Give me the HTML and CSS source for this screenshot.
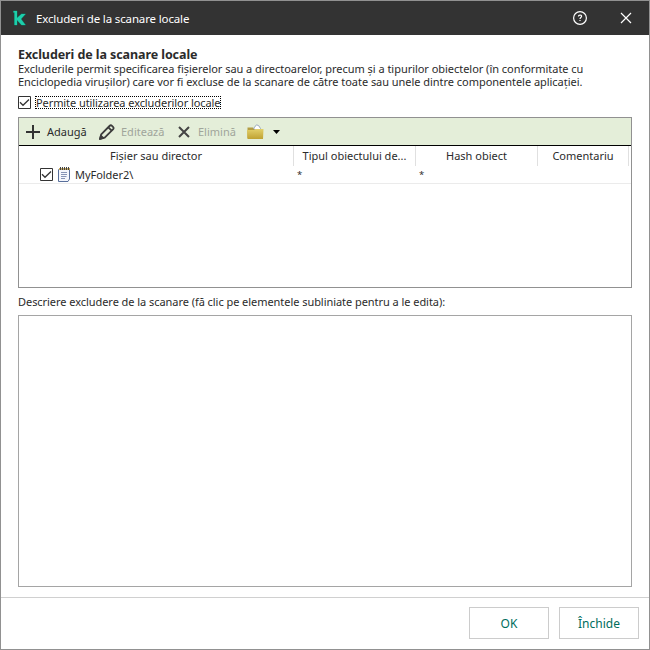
FILE: index.html
```html
<!DOCTYPE html>
<html lang="ro">
<head>
<meta charset="utf-8">
<title>Excluderi de la scanare locale</title>
<link rel="stylesheet" href="styles.css">
</head>
<body>
<div class="window">
  <header class="titlebar">
    <svg class="logo" width="14" height="16" viewBox="0 0 14 16"><path d="M.5 1H4V8L8.500 4H12.500L8 9 12.500 15H8.500L4 10V15H1.500V2.500H.5Z" fill="#1dceaa" stroke="#087866" stroke-width=".8" paint-order="stroke"/></svg>
    <span class="title">Excluderi de la scanare locale</span>
    <svg class="help" width="16" height="16" viewBox="0 0 16 16" fill="none" stroke="#fff" stroke-width="1.200"><circle cx="8" cy="8" r="6.400"/><path d="M6.400 6.500C6.400 4.600 9.600 4.600 9.600 6.300C9.600 7.500 8 7.500 8 8.900M8 9.900V11.100"/></svg>
    <svg class="close" width="12" height="12" viewBox="0 0 12 12" fill="none" stroke="#fff" stroke-width="1.200"><path d="M1 1 11 11M11 1 1 11"/></svg>
  </header>
  <main class="content">
    <h1 class="heading">Excluderi de la scanare locale</h1>
    <p class="intro"><span>Excluderile permit specificarea fișierelor sau a directoarelor, precum și a tipurilor obiectelor (în conformitate cu</span><br><span>Enciclopedia virușilor) care vor fi excluse de la scanare de către toate sau unele dintre componentele aplicației.</span></p>
    <div class="option">
      <svg class="check" width="13" height="13" viewBox="0 0 13 13" fill="none" stroke="#333"><path d="M.5 .5H12.500V12.500H.5Z"/><path d="M2 6.300 5 9.300 11 3.500" stroke-width="1.300"/></svg>
      <span class="option-label">Permite utilizarea excluderilor locale</span>
    </div>
    <section class="list">
      <div class="toolbar">
        <svg class="i-add" width="14" height="14" viewBox="0 0 14 14" stroke="#333" stroke-width="2"><path d="M7 0V14M0 7H14"/></svg>
        <span class="t-add">Adaugă</span>
        <svg class="i-edit" width="16" height="16" viewBox="0 0 16 16" fill="none" stroke="#3c3c3c" stroke-width="1.800" stroke-linejoin="round"><path d="M1 15 2.200 10.300 10.500 2Q11.800 .7 13 1.900L14 2.900Q15.200 4.100 14 5.400L5.700 13.700Z"/><path d="M9.300 3.300 12.700 6.700M1 15 2 11.800 4.200 14Z"/></svg>
        <span class="t-edit off">Editează</span>
        <svg class="i-del" width="12" height="12" viewBox="0 0 12 12" stroke="#444" stroke-width="2"><path d="M1 1 11 11M11 1 1 11"/></svg>
        <span class="t-del off">Elimină</span>
        <svg class="i-folder" width="17" height="16" viewBox="0 0 17 16"><defs><linearGradient id="gold" x2="0" y2="1"><stop stop-color="#e3d06a"/><stop offset="1" stop-color="#c0a232"/></linearGradient></defs><path d="M.5 3.500H6L7.500 5H15.500V14H.5Z" fill="#b49d42"/><path d="M6.500 4.500 9.500 .8Q12 .8 13.500 4.500L11 7Z" fill="#fff" stroke="#91a0b5" stroke-width=".9"/><path d="M0 6H7L8.500 5H16.500L16 15H.5Z" fill="url(#gold)"/></svg>
        <svg class="i-drop" width="7" height="4" viewBox="0 0 7 4"><path d="M0 0H7L3.500 4Z"/></svg>
      </div>
      <div class="columns">
        <div class="c1"><span>Fișier sau director</span></div>
        <div><span>Tipul obiectului de...</span></div>
        <div><span>Hash obiect</span></div>
        <div><span>Comentariu</span></div>
      </div>
      <div class="row">
        <div class="name">
          <svg class="check" width="13" height="13" viewBox="0 0 13 13" fill="none" stroke="#333"><path d="M.5 .5H12.500V12.500H.5Z"/><path d="M2 6.300 5 9.300 11 3.500" stroke-width="1.300"/></svg>
          <svg class="doc" width="12" height="15" viewBox="0 0 12 15"><path d="M1.500 1.500H11.500V12L10 14.500H.5V3Z" fill="#f4f6fc" stroke="#596f9b"/><path d="M1 2H12" stroke="#c4a65f" stroke-width="2"/><path d="M2 1.500H11" stroke="#444" stroke-width="3" stroke-dasharray="1 1"/><path d="M3 5.500H9M3 7.500H9M3 9.500H8.500M3 11.500H7" stroke="#8794b5"/></svg>
          <span class="w-name">MyFolder2\</span>
        </div>
        <div class="any">*</div><div class="any">*</div><div></div>
      </div>
    </section>
    <p class="caption"><span>Descriere excludere de la scanare (fă clic pe elementele subliniate pentru a le edita):</span></p>
    <div class="description"></div>
  </main>
  <footer class="footer"><button class="btn">OK</button><button class="btn">Închide</button></footer>
</div>
</body>
</html>
```
FILE: styles.css
```css
* { box-sizing: border-box; }
body { margin: 0; font: 11px/13px "Noto Sans", "Open Sans", sans-serif; color: #2b2b2b; }
svg { display: block; flex: none; }
span { white-space: nowrap; }
.window { width: 650px; height: 650px; border: 1px solid #919191; background: #fff; display: flex; flex-direction: column; }
.titlebar { height: 34px; flex: none; background: #333; color: #fff; display: flex; align-items: center; padding: 0 17px 0 12px; font-size: 11.5px; }
.title { margin: 0 auto 0 9px; letter-spacing: -.14px; }
.help { margin-right: 32px; }
.content { padding: 12px 17px 0; height: 562px; flex: none; }
.heading { margin: 0; height: 15px; font-size: 12.5px; line-height: 15px; letter-spacing: -.08px; }
.intro { margin: 0; height: 26px; letter-spacing: -.036px; }
.option { display: flex; gap: 4px; height: 13px; margin-top: 8px; }
.option-label { width: 186px; height: 13px; line-height: 13px; outline: 1px dotted #000; outline-offset: -1px; padding-left: 1px; letter-spacing: -.08px; }
.list { border: 1px solid #919191; height: 171px; margin-top: 8px; }
.toolbar { height: 28px; background: #e4eed9; border-bottom: 1px solid #000; display: flex; align-items: center; padding-left: 7px; }
.off { color: #a0a59b; }
.t-add { width: 45px; margin: 0 7px; }
.t-edit { width: 51px; margin: 0 6px; }
.t-del { width: 42px; margin: 0 7px 0 8px; }
.i-drop { margin-left: 9px; }
.columns, .row { display: grid; grid-template-columns: 275px 122px 122px 91px 1fr; }
.columns { height: 20px; line-height: 20px; text-align: center; }
.columns div { border-right: 1px solid #e0e0e0; }
.row { height: 18px; line-height: 17px; border-bottom: 1px solid #ebebeb; }
.row > div + div { padding-left: 3px; }
.any { font-size: 9.5px; }
.name { display: flex; align-items: center; padding-left: 21px; }
.doc { margin: 0 5px; }
.w-name { letter-spacing: -.04px; }
.caption { margin: 7px 0; height: 13px; letter-spacing: -.05px; }
.description { height: 272px; border: 1px solid #a5a5a5; }
.footer { border-top: 1px solid #d0d0d0; flex: 1; display: flex; justify-content: flex-end; gap: 10px; padding: 9px 10px 0; }
.btn { width: 80px; height: 32px; padding: 0; border: 1px solid #ccc; background: #fff; color: #006d5c; font: 12px "Noto Sans", sans-serif; }
```
